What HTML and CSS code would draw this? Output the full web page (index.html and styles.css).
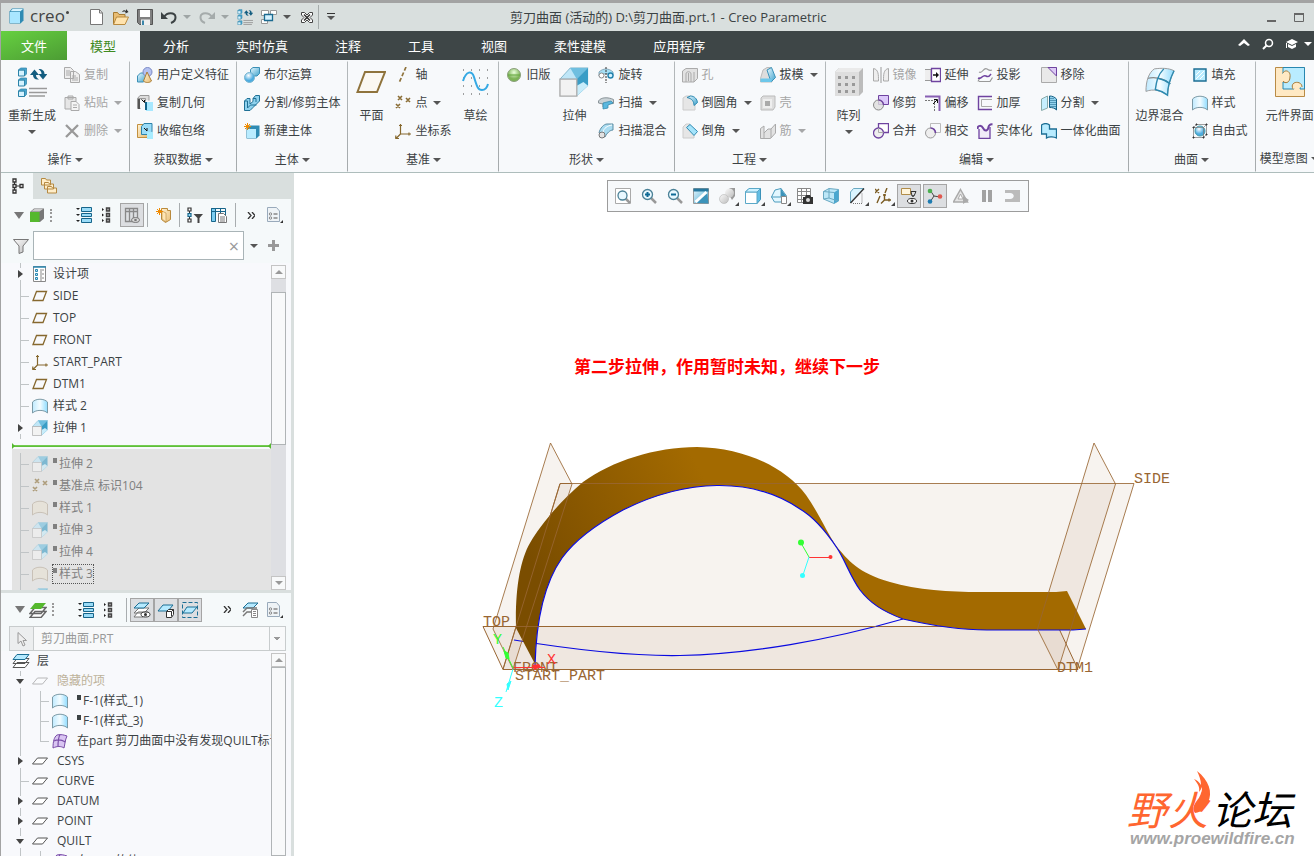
FILE: index.html
```html
<!DOCTYPE html>
<html lang="zh-CN">
<head>
    <meta charset="UTF-8">
    <meta name="viewport" content="width=device-width, initial-scale=1.0">
    <title>剪刀曲面 - Creo Parametric</title>
    <link rel="stylesheet" href="styles.css">
</head>
<body>
    <!-- Shared icons -->
    <svg class="defs" width="0" height="0" aria-hidden="true">
        <defs>
            <linearGradient id="blue" x1="0" y1="0" x2="1" y2="1"><stop offset="0" stop-color="#e8f8ff"/><stop offset="1" stop-color="#3fa3cc"/></linearGradient>
            <linearGradient id="sky" x1="0" y1="0" x2="1" y2="0"><stop offset="0" stop-color="#bfeaff"/><stop offset=".5" stop-color="#f4fcff"/><stop offset="1" stop-color="#8fdcff"/></linearGradient>
            <linearGradient id="grey" x1="0" y1="0" x2="1" y2="1"><stop offset="0" stop-color="#fafafa"/><stop offset="1" stop-color="#bdbdbd"/></linearGradient>
            <linearGradient id="tan" x1="0" y1="0" x2="1" y2="1"><stop offset="0" stop-color="#fff3d6"/><stop offset="1" stop-color="#e9bd74"/></linearGradient>
            <linearGradient id="gold" gradientUnits="userSpaceOnUse" x1="530" y1="560" x2="700" y2="470"><stop offset="0" stop-color="#7a4d00"/><stop offset="1" stop-color="#a36a00"/></linearGradient>
            <radialGradient id="ball" cx=".4" cy=".3"><stop offset="0" stop-color="#fff"/><stop offset="1" stop-color="#4cace0"/></radialGradient>
            <radialGradient id="greenball" cx=".5" cy=".3"><stop offset="0" stop-color="#eaffdc"/><stop offset="1" stop-color="#7cb356"/></radialGradient>
        </defs>
        <symbol id="extrude" viewBox="0 0 16 16"><path d="M.5 6.500 6 .5h9.500L9.500 6.500z" fill="#bfe6f7" stroke="#7fb4cb" stroke-width=".5"/><path d="M6 .5h9.500L9.500 6.500z" fill="#6fbfe0"/><path d="M9.500 6.500l6-6V10L9.500 15.500z" fill="#3a9dc6"/><path d="M9.500 15.500l6-5.500-2.500-2L9.500 10z" fill="#c8ecfa"/><path d="M.5 6.500h9v9h-9z" fill="#f2f2f2" stroke="#aaa" stroke-width=".7"/></symbol>
        <symbol id="surf" viewBox="0 0 16 16"><path d="M.5 4C4 .3 12 .3 15.500 4v11C12 11.500 4 11.500.5 15z" fill="url(#sky)" stroke="#7c9aa6"/></symbol>
        <symbol id="surfoff" viewBox="0 0 16 16"><path d="M.5 4C4 .3 12 .3 15.500 4v11C12 11.500 4 11.500.5 15z" fill="#e9e2d4" stroke="#b8ac9a"/></symbol>
        <symbol id="plane" viewBox="0 0 16 16"><path d="M4.500 3.500h10l-3.500 9H1z" fill="none" stroke="#86682e" stroke-width="1.300"/></symbol>
        <symbol id="csys" viewBox="0 0 16 16"><path d="M5.500 1v10H16M5.500 11 1 15.500M4 2.500h3M14 9.500v3M.8 12.500v3.200H4" fill="none" stroke="#86682e" stroke-width="1.200"/></symbol>
        <symbol id="points" viewBox="0 0 16 16"><path d="M3 1l4 4M7 1 3 5M11 3l4 4m0-4-4 4M1 9l4 4m0-4-4 4" stroke="#8a6d35" stroke-width="1.600"/></symbol>
        <symbol id="layer" viewBox="0 0 16 16"><path d="M5.500 5H15.500L10.500 11H.5z" fill="#fff" stroke="#555"/></symbol>
        <symbol id="quilt" viewBox="0 0 16 16"><path d="M1 15C1 9 2 4 5 2c4-1 7 0 10 1-2 4-2 8-3 12-3-2-7-2-11 0z" fill="#d9c5f2" stroke="#7a4ea8"/><path d="M8 1.500C6 5 6 9 6 14M2 8c4-2 8-1 11.500 1" fill="none" stroke="#7a4ea8" stroke-width="1.200"/></symbol>
        <symbol id="rows" viewBox="0 0 16 16"><path d="M5.500.5h10v4h-10zM5.500 6.500h10v3h-10zM5.500 11.500h10v4h-10z" fill="#9adcf8" stroke="#17658a"/><path d="M0 1h4L2 3zM0 7h4L2 9zM0 13h4l-2 2z" fill="#222"/></symbol>
        <symbol id="boxes" viewBox="0 0 16 16"><path d="M6.500 1h3v3h-3zM6.500 6.500h3v3h-3zM6.500 12h3v3h-3z" fill="#aaa" stroke="#444" stroke-width="1.400"/><path d="M2 1l2 1.500L2 4zM2 6.500l2 1.500-2 1.500zM2 12l2 1.500L2 15z" fill="#222"/></symbol>
        <symbol id="doc" viewBox="0 0 16 16"><path d="M.5.5h9l3 3.500v10.500H.5z" fill="#eef3f6" stroke="#9ab"/><circle cx="3.500" cy="7" r="1.200" fill="none" stroke="#888"/><circle cx="3.500" cy="11" r="1.200" fill="none" stroke="#888"/><path d="M6.500 7h4M6.500 11h4" stroke="#888" stroke-width="1.400"/><path d="M16 13v3h-3z" fill="#333"/></symbol>
        <symbol id="regen" viewBox="0 0 30 30"><path d="M1.500 3h6v6h-6zM1.500 13h6v6h-6zM1.500 24h6v5.500h-6z" fill="#d4f2ff" stroke="#2b82a8"/><path d="M1.500 3 3.500 1h6v6l-2 2V3zM1.500 13l2-2h6v6l-2 2v-6zM1.500 24l2-2h6v5.500l-2 2V24z" fill="#49a6cf" stroke="#2b82a8" stroke-width=".7"/><path d="M12 21.500h19M12 25.500h19M12 29h16" stroke="#9a9a9a" stroke-width="1.700"/><path d="M13 8l4.500-5.500L22 8h-3c0 2 1 3 3 4.500C18 13 16 11 16 8z" fill="#135d80"/><path d="M30.500 7 26 12.500 21.500 7h3c0-2-1-3.500-3-5C25.500 2 27.500 4 27.500 7z" fill="#135d80"/></symbol>
        <symbol id="mag" viewBox="0 0 16 16"><path d="M10 10l5 5" stroke="#999" stroke-width="2.500"/><circle cx="6.500" cy="6.500" r="5" fill="#e9f8ff" stroke="#4b8197" stroke-width="1.300"/></symbol>
    </svg>

    <div class="app">
        <header class="titlebar">
            <div class="brand">
                <svg width="15" height="16" viewBox="0 0 15 16"><path d="M.5 3.500 3 .5h11.500v12l-3 3H.5z" fill="#2f8bb3"/><path d="M1 4h10v11H1z" fill="#a9e6ff"/><path d="M1.500 3.200 3.500 1H14l-2.500 2.200z" fill="#d7f4ff"/></svg>
                <span>creo</span>
            </div>
            <nav class="quick" aria-label="快速访问">
                <button aria-label="新建"><svg class="ic" viewBox="0 0 16 16"><path d="M1.500.5h9l3 3.500v11.500h-12z" fill="#fff" stroke="#777"/><path d="M10.500.5V4h3" fill="none" stroke="#777"/></svg></button>
                <button aria-label="打开"><svg class="ic" viewBox="0 0 16 16"><path d="M.5 15V3.500h4l1.500 2h6V8" fill="#e9bd74" stroke="#a67a32"/><path d="M.5 15.500 3.500 8h12l-3.500 7.500z" fill="#ffe3ae" stroke="#b88a3e"/><path d="M9 3c1-2 3-2 4-1V0l2.500 3-3 1.500V3C11 2 10 3 9 3z" fill="#333"/></svg></button>
                <button aria-label="保存"><svg class="ic" viewBox="0 0 16 16"><path d="M.5.5h15v15h-13l-2-2z" fill="#808080" stroke="#555"/><path d="M3 1h10v7H3z" fill="#fff"/><path d="M4 10.500h9V16H4z" fill="#eee"/><path d="M5 11.500h2V16H5z" fill="#3b86aa"/></svg></button>
                <button aria-label="撤消"><svg class="ic" viewBox="0 0 16 16"><path d="M3 8c3-5 11-5 11.500 0 .2 3-2 5-4.500 6" fill="none" stroke="#3c4244" stroke-width="2"/><path d="M0 3v7h7z" fill="#3c4244"/></svg></button>
                <button class="arr off" aria-label="撤消列表"></button>
                <button aria-label="重做"><svg class="ic" viewBox="0 0 16 16"><path d="M13 8C10 3 2 3 1.500 8c-.2 3 2 5 4.500 6" fill="none" stroke="#a5abab" stroke-width="2"/><path d="M16 3v7H9z" fill="#a5abab"/></svg></button>
                <button class="arr off" aria-label="重做列表"></button>
                <button aria-label="重新生成"><svg class="ic"><use href="#regen"/></svg></button>
                <button aria-label="窗口"><svg class="ic" viewBox="0 0 16 16"><path d="M.5 1.500h7v5h-7zM9.500 1.500h6v4h-6zM.5 10.500h6v4h-6z" fill="#fff" stroke="#999"/><path d="M3.500 5.500h8v6h-8z" fill="#d5f2ff" stroke="#1b6a90" stroke-width="1.300"/></svg></button>
                <button class="arr" aria-label="窗口列表"></button>
                <button aria-label="关闭"><svg class="ic" viewBox="0 0 16 16"><path d="M2.500 3.500h3L8 6l2.500-2.500h3V6L11 8.500l2.500 2.500v2.500h-3L8 11l-2.500 2.500h-3V11L5 8.500 2.500 6z" fill="#fff" stroke="#444"/><path d="M5 5.500l6 6M11 5.500l-6 6" stroke="#333" stroke-width="1.500"/></svg></button>
                <i class="vsep"></i>
                <button class="arr more" aria-label="自定义"></button>
            </nav>
            <h1>剪刀曲面 (活动的) D:\剪刀曲面.prt.1 - Creo Parametric</h1>
            <div class="winbtns">
                <button aria-label="最小化"><svg width="10" height="10"><path d="M1 8h9v2H1z" fill="#666"/></svg></button>
                <button aria-label="最大化"><svg width="10" height="10"><path d="M.5 1.500h9v8h-9z" fill="none" stroke="#666"/><path d="M0 1h10v2H0z" fill="#666"/></svg></button>
            </div>
        </header>

        <nav class="tabs">
            <button class="file">文件</button>
            <button class="active">模型</button>
            <button>分析</button>
            <button>实时仿真</button>
            <button>注释</button>
            <button>工具</button>
            <button>视图</button>
            <button>柔性建模</button>
            <button>应用程序</button>
            <div class="tools">
                <button aria-label="折叠"><svg width="12" height="12"><path d="M0 7l6-6 6 6-2 1-4-3-4 3z" fill="#fff"/></svg></button>
                <button aria-label="搜索"><svg width="12" height="12"><circle cx="7" cy="5" r="3.500" fill="none" stroke="#fff" stroke-width="1.500"/><path d="M5 7l-4 4" stroke="#fff" stroke-width="2"/></svg></button>
                <button aria-label="学习"><svg width="12" height="12"><path d="M0 4l6-3 6 3-6 3z" fill="#fff"/><path d="M2 6l4 2 4-2v3l-4 2-4-2zM0 5h1v5H0z" fill="#fff"/></svg></button>
                <button class="arr white" aria-label="学习列表"></button>
            </div>
        </nav>

        <section class="ribbon">
            <div class="group">
                <div class="cols">
                    <button class="big"><svg class="ic30"><use href="#regen"/></svg>重新生成<i class="arr"></i></button>
                    <div class="col">
                        <button disabled><svg class="ic" viewBox="0 0 16 16"><path d="M.5.500h6l3 3v8h-9zM6.500 4.500h5l4 3v8h-9z" fill="#eee" stroke="#aaa"/><path d="M2 4h4M2 6h4M2 8h4M8 9h4M8 11h6M8 13h6" stroke="#aaa"/></svg>复制</button>
                        <button disabled><svg class="ic" viewBox="0 0 16 16"><path d="M1 2.500h11V14H1zM4 1h5v3H4z" fill="#e6e6e6" stroke="#aaa"/><path d="M7 6.500h5l3 3v6H7z" fill="#f5f5f5" stroke="#aaa"/><path d="M9 10h4M9 12.500h4" stroke="#aaa"/></svg>粘贴<i class="arr"></i></button>
                        <button disabled><svg class="ic" viewBox="0 0 16 16"><path d="M2 2l12 12M14 2 2 14" stroke="#999" stroke-width="2.300"/></svg>删除<i class="arr"></i></button>
                    </div>
                </div>
                <button class="caption">操作<i class="arr"></i></button>
            </div>
            <div class="group">
                <div class="cols">
                    <div class="col">
                        <button><svg class="ic" viewBox="0 0 16 16"><path d="M.5 9l3-3h6v6l-3 3h-6z" fill="url(#blue)" stroke="#3b8fb5"/><circle cx="10.500" cy="5" r="4.500" fill="#b4c1f0" stroke="#7a89c4"/><path d="M10 5l4.500 9c-2 2-6 2-8 0z" fill="url(#tan)" stroke="#a87d37"/></svg>用户定义特征</button>
                        <button><svg class="ic" viewBox="0 0 16 16"><path d="M.5 3.500 3 .5h9v5M.5 3.500h8v3M.5 3.500v10h3" fill="#ddd" stroke="#999"/><path d="M1 4h2v10H1z" fill="#555"/><path d="M9 7h7v9H9z" fill="#a8e8ff"/><path d="M8 7h2v8H8z" fill="#13648a"/><path d="M4.500 4.500l3 3V5" fill="none" stroke="#111"/></svg>复制几何</button>
                        <button><svg class="ic" viewBox="0 0 16 16"><path d="M.5 1.500h10v13H.5z" fill="url(#tan)" stroke="#c2903f"/><path d="M4.500 3.500 7 .5h8v8l-2 3H4.500z" fill="#9adcf8" stroke="#2c83aa"/><path d="M10 9h6v7h-6z" fill="#a8ecff"/><path d="M7 5l3 3V5" fill="none" stroke="#111"/></svg>收缩包络</button>
                    </div>
                </div>
                <button class="caption">获取数据<i class="arr"></i></button>
            </div>
            <div class="group">
                <div class="cols">
                    <div class="col">
                        <button><svg class="ic" viewBox="0 0 16 16"><path d="M6.500 2.500 9 .5h6.500v6L13 9H6.500z" fill="url(#blue)" stroke="#3b8fb5"/><circle cx="5.500" cy="10.500" r="5" fill="url(#ball)" stroke="#79b5d0"/></svg>布尔运算</button>
                        <button><svg class="ic" viewBox="0 0 16 16"><path d="M.5 6 3 3.500h3V9l3-2.500V3.500L11.500.5h4V6L9 12.500 6 15.500H.5z" fill="#8fd2ee" stroke="#1f7095"/><path d="M.5 6h3v7l3-3h6M9 3.500h3V7" fill="none" stroke="#1f7095"/></svg>分割/修剪主体</button>
                        <button><svg class="ic" viewBox="0 0 16 16"><path d="M2.500 5.500 5 2.500h10.500v10l-3 3h-10z" fill="#2f8bb3"/><path d="M3 6h9v9H3z" fill="#b9ecff"/><path d="M3.500 0v7M0 3.500h7M1 1l5 5M6 1 1 6" stroke="#f08a00"/></svg>新建主体</button>
                    </div>
                </div>
                <button class="caption">主体<i class="arr"></i></button>
            </div>
            <div class="group">
                <div class="cols">
                    <button class="big"><svg class="ic30" viewBox="0 0 30 30"><path d="M9 5h20l-8 20H1.500z" fill="#fbf8f2" stroke="#8f733c" stroke-width="2"/></svg>平面</button>
                    <div class="col">
                        <button><svg class="ic" viewBox="0 0 16 16"><path d="M11 0 4 16" stroke="#8f733c" stroke-width="1.700" stroke-dasharray="4 2"/></svg>轴</button>
                        <button><svg class="ic"><use href="#points"/></svg>点<i class="arr"></i></button>
                        <button><svg class="ic"><use href="#csys"/></svg>坐标系</button>
                    </div>
                    <button class="big"><svg class="ic30" viewBox="0 0 30 30"><path d="M3 3h27M3 11h27M3 19h27M3 27h27" stroke="#444" stroke-dasharray="1 7"/><path d="M3 14C6 4 12 3 14 10c3 10 4 13 8 13 3 0 5-2 6-6" fill="none" stroke="#35a9e4" stroke-width="2"/></svg>草绘</button>
                </div>
                <button class="caption">基准<i class="arr"></i></button>
            </div>
            <div class="group">
                <div class="cols">
                    <div class="col">
                        <button><svg class="ic" viewBox="0 0 16 16"><circle cx="8" cy="8" r="6.500" fill="url(#greenball)" stroke="#8ba07c"/><path d="M2 8h12" stroke="#63a63c"/></svg>旧版</button>
                    </div>
                    <button class="big"><svg class="ic30"><use href="#extrude"/></svg>拉伸</button>
                    <div class="col">
                        <button><svg class="ic" viewBox="0 0 16 16"><path d="M1 5c4-4 10-4 14 0v4c-4-3-10-3-14 0z" fill="#a5dff5" stroke="#8ab"/><circle cx="3.500" cy="8.500" r="2.500" fill="#fff" stroke="#888"/><circle cx="12.500" cy="8.500" r="2.500" fill="#d4f3ff" stroke="#2382ad" stroke-width="1.400"/><path d="M8 0v16" stroke="#333" stroke-dasharray="2 1"/></svg>旋转</button>
                        <button><svg class="ic" viewBox="0 0 16 16"><path d="M.5 6C3 2 10 2 15.500 4.500v4L9 9v4l-4-1V9L.5 8z" fill="#c9d2d6" stroke="#8a9499"/><path d="M5 8l8-2 2 2-5 2v3l-5 1z" fill="#5bb8df" stroke="#2f86aa" stroke-width=".7"/></svg>扫描<i class="arr"></i></button>
                        <button><svg class="ic" viewBox="0 0 16 16"><path d="M1 10C2 5 6 1 9 1h6v6c-3 0-6 3-8 7z" fill="#a9dcf1" stroke="#5c8da3"/><path d="M5 9c1-4 4-6 9-7" fill="none" stroke="#fff"/><circle cx="4" cy="12" r="3" fill="#e2e2e2" stroke="#777"/></svg>扫描混合</button>
                    </div>
                </div>
                <button class="caption">形状<i class="arr"></i></button>
            </div>
            <div class="group">
                <div class="cols">
                    <div class="col">
                        <button disabled><svg class="ic" viewBox="0 0 16 16"><path d="M.5 4 4 1.500h11.500v10L12 15H.5z" fill="#e2e2e2" stroke="#aaa"/><path d="M4 15V7c0-3 5-3 5 0v8M12 5v10M6.500 6v8" fill="none" stroke="#aaa"/></svg>孔</button>
                        <button><svg class="ic" viewBox="0 0 16 16"><path d="M1 3 4 1h5l-3 2c4 0 7 3 7 7v5H1z" fill="#e6e6e6" stroke="#ccc"/><path d="M5 2.500 8.500 1c4 0 6.500 3 7 6.500L12 10.500c0-4-2-7-7-8z" fill="url(#blue)" stroke="#2f8bb3"/></svg>倒圆角<i class="arr"></i></button>
                        <button><svg class="ic" viewBox="0 0 16 16"><path d="M1 4 4 1h4L6 4l6 7v4H1z" fill="#e6e6e6" stroke="#ccc"/><path d="M4.500 4.500 8 1.500l7.500 7-3.500 4z" fill="#a5e4fb" stroke="#2f8bb3"/></svg>倒角<i class="arr"></i></button>
                    </div>
                    <div class="col">
                        <button><svg class="ic" viewBox="0 0 16 16"><path d="M.5 11.500 3 3l4-2.500 4 0 1 11.500v3H.5z" fill="#ddd" stroke="#bbb"/><path d="M7 3 11.500.5l4 10-4.500 4.500z" fill="url(#blue)" stroke="#3a92b9"/><path d="M.5 11.500h11v3.500H.5z" fill="#6dc7ea"/></svg>拔模<i class="arr"></i></button>
                        <button disabled><svg class="ic" viewBox="0 0 16 16"><path d="M1 3 3 1h12v11l-2 3H1z" fill="#ddd" stroke="#bbb"/><path d="M4 5h7v7H4z" fill="#aaa" stroke="#eee" stroke-width="2"/></svg>壳</button>
                        <button disabled><svg class="ic" viewBox="0 0 16 16"><path d="M.5 15.500v-10L4 3v7l4-4h3l4.500-5v9l-5 5.500z" fill="#e2e2e2" stroke="#aaa"/><path d="M4 10v5M11 6v9" stroke="#aaa"/></svg>筋<i class="arr"></i></button>
                    </div>
                </div>
                <button class="caption">工程<i class="arr"></i></button>
            </div>
            <div class="group">
                <div class="cols">
                    <button class="big"><svg class="ic30" viewBox="0 0 30 30"><path d="M1 5 5 1h24v24l-4 4H1z" fill="#bcbcbc"/><path d="M1 5h24v24H1z" fill="#dedede"/><path d="M1 5 5 1h24l-4 4z" fill="#eaeaea"/><path d="M4 10.500h17M4 17.500h17M4 24.500h17" stroke="#999" stroke-width="3" stroke-dasharray="3 4"/></svg>阵列<i class="arr"></i></button>
                    <div class="col">
                        <button disabled><svg class="ic" viewBox="0 0 16 16"><path d="M.5 1.500c5 1 5 6 5 12.500h-5zM15.500 1.500c-5 1-5 6-5 12.500h5z" fill="#eee" stroke="#aaa"/><path d="M8 0v16" stroke="#999"/></svg>镜像</button>
                        <button><svg class="ic" viewBox="0 0 16 16"><path d="M5.500.5h10v9h-10z" fill="#dcc8fa" stroke="#6f43a0"/><circle cx="5.500" cy="10" r="5" fill="#ddd" fill-opacity=".8" stroke="#888"/><path d="M5.500 5a5 5 0 0 1 5 5" fill="none" stroke="#6f43a0" stroke-width="1.300"/></svg>修剪</button>
                        <button><svg class="ic" viewBox="0 0 16 16"><path d="M5.500.5h10v9h-10z" fill="#fff" stroke="#6f43a0" stroke-width="1.300"/><circle cx="5.500" cy="10" r="5" fill="#eee" stroke="#6f43a0" stroke-width="1.300"/><path d="M5.500 5v4.500h5" fill="none" stroke="#aaa"/></svg>合并</button>
                    </div>
                    <div class="col">
                        <button><svg class="ic" viewBox="0 0 16 16"><path d="M0 2.500h6v11H0" fill="#eee" stroke="#999"/><path d="M6.500 1.500h9v13h-9z" fill="#fff" stroke="#6f43a0" stroke-width="1.300"/><path d="M8 8h4" stroke="#111" stroke-width="1.500"/><path d="M11 5l3 3-3 3z" fill="#111"/></svg>延伸</button>
                        <button><svg class="ic" viewBox="0 0 16 16"><path d="M0 1.500h14.500V16" fill="none" stroke="#8860b4" stroke-width="2"/><path d="M0 5.500h9.500V16" fill="none" stroke="#777" stroke-dasharray="2 1"/><path d="M8 9l4-4M9 4.500h3.500V8" fill="none" stroke="#111"/></svg>偏移</button>
                        <button><svg class="ic" viewBox="0 0 16 16"><path d="M5.500.5h10v9h-10z" fill="none" stroke="#bbb"/><circle cx="5.500" cy="10" r="5" fill="#eee" stroke="#999"/><path d="M5.500 5a5 5 0 0 1 5 5" fill="none" stroke="#6f43a0" stroke-width="1.700"/></svg>相交</button>
                    </div>
                    <div class="col">
                        <button><svg class="ic" viewBox="0 0 16 16"><path d="M2 5c4 2 4-5 8-3 2 1 2 2 5 1M2 14.500h11l2.500-4M1 14.500l2-4" fill="none" stroke="#999" stroke-width="1.200"/><path d="M1 11c4 2 4-4 8-2 2 1 3 1 5-2" fill="none" stroke="#6f43a0" stroke-width="1.500"/></svg>投影</button>
                        <button><svg class="ic" viewBox="0 0 16 16"><path d="M15 1.500H1.500v13H15" fill="none" stroke="#6f43a0" stroke-width="1.400"/><path d="M15 4.500H4.500v7H15" fill="none" stroke="#aaa"/></svg>加厚</button>
                        <button><svg class="ic" viewBox="0 0 16 16"><path d="M2 6v9.500h11V4" fill="#f1ecf8" stroke="#6f43a0" stroke-width="1.300"/><path d="M.5 6c0-4 4-4 5.500-1 2 4 5 3 5.500-1 .3-2 2-3 4-2.500" fill="none" stroke="#6f43a0" stroke-width="2"/></svg>实体化</button>
                    </div>
                    <div class="col">
                        <button><svg class="ic" viewBox="0 0 16 16"><path d="M.5.500h15v15H.5z" fill="#e9e9e9" stroke="#aaa"/><path d="M7 .5h8.500V9z" fill="#dccaf5" stroke="#6f43a0"/></svg>移除</button>
                        <button><svg class="ic" viewBox="0 0 16 16"><path d="M.5 4 6.500 1v12l-6 2.500z" fill="#c6efff" stroke="#8aa"/><path d="M8.500 1c3 0 5 1 7 3v11c-2-2-4-2.500-7-2.500z" fill="#93d3ee" stroke="#145f84"/><path d="M10 3v9M12 3v10M14 5v9" stroke="#145f84" stroke-dasharray="1 1"/></svg>分割<i class="arr"></i></button>
                        <button><svg class="ic" viewBox="0 0 16 16"><path d="M.5 2c3-2 6-1.500 8 0v4h7v9c-2-1-7-2-10 0v-4h-5z" fill="#b9ecff" stroke="#1c6e94" stroke-width="1.300"/></svg>一体化曲面</button>
                    </div>
                </div>
                <button class="caption">编辑<i class="arr"></i></button>
            </div>
            <div class="group">
                <div class="cols">
                    <button class="big"><svg class="ic30" viewBox="0 0 32 30"><path d="M1 25C1 14 4 5 10 1c8-1 15-1 21 2-4 8-6 15-7 26-7-5-15-7-23-4z" fill="url(#sky)" stroke="#999"/><path d="M3 11c9-2 16 0 24 6" fill="none" stroke="#888" stroke-width="1.300"/><path d="M20 1C13 8 12 16 11 23c5 1 9 3 13 6 0-10 3-18 7-26M14 11c5 1 9 3 13 6" fill="none" stroke="#2d8ab0" stroke-width="1.500"/></svg>边界混合</button>
                    <div class="col">
                        <button><svg class="ic" viewBox="0 0 16 16"><path d="M2 2h12v12H2z" fill="#b9ecff" stroke="#1c6e94" stroke-width="1.400"/><path d="M4 12l8-8M4 8l4-4M8 12l4-4" stroke="#fff"/></svg>填充</button>
                        <button><svg class="ic"><use href="#surf"/></svg>样式</button>
                        <button><svg class="ic" viewBox="0 0 16 16"><circle cx="8" cy="8" r="5" fill="url(#ball)" stroke="#49a"/><path d="M1.500 4.500h10v10h-10zM4.500 1.500h10v10M1.500 4.500l3-3M11.500 4.500l3-3M11.500 14.500l3-3" fill="none" stroke="#777" stroke-width=".7"/><path d="M1 4h1v1H1zM4 1h1v1H4zM14 1h1v1h-1zM1 14h1v1H1zM11 14h1v1h-1zM14 11h1v1h-1z" stroke="#333" fill="#333"/></svg>自由式</button>
                    </div>
                </div>
                <button class="caption">曲面<i class="arr"></i></button>
            </div>
            <div class="group last">
                <div class="cols">
                    <button class="big"><svg class="ic30" viewBox="0 0 30 30"><path d="M.5.500h29v29H.5z" fill="#ffe9c4" stroke="#b98b45"/><path d="M8 .5h21.500V22H25c3-8-8-8-6 0H8v-7c8 3 8-10 0-8z" fill="#b9ecff" stroke="#2887b0"/><path d="M8 6c2-4 8-2 7 4 0 6-5 7-7 4M18 22c-4-8 9-9 9-2" fill="#ffe9c4" stroke="#a67c3b"/></svg>元件界面</button>
                </div>
                <button class="caption">模型意图<i class="arr"></i></button>
            </div>
        </section>

        <main class="work">
            <aside class="side">
                <div class="strip">
                    <button class="on" aria-label="模型树"><svg class="ic" viewBox="0 0 16 16"><path d="M5.500 4v8M7 8h5" stroke="#333"/><path d="M4 1h3v3H4zM4 6.500h3v3H4zM4 12h3v3H4zM11 6.500h3v3h-3z" fill="#fff" stroke="#333" stroke-width="1.300"/></svg></button>
                    <button aria-label="文件夹浏览器"><svg class="ic" viewBox="0 0 16 16"><path d="M.5 7V.5h4l1 1.500h4v5zM3.500 11V4.500h4l1 1.500h4v5zM6.500 15V8.500h4l1 1.500h4v5z" fill="#ffedc8" stroke="#b48942"/></svg></button>
                </div>
                <div class="bar">
                    <button class="fold" aria-label="折叠"></button>
                    <svg class="ic" viewBox="0 0 16 16"><path d="M1 5 5 1.500h10v10L11 15H1z" fill="#777"/><path d="M2 4.500 5.500 2H14l-3.500 2.500z" fill="#ccc"/><path d="M1 5h9.500v10H1z" fill="#55b82e"/></svg>
                    <i class="dots"></i>
                    <button aria-label="展开"><svg class="ic"><use href="#rows"/></svg></button>
                    <button aria-label="收缩"><svg class="ic"><use href="#boxes"/></svg></button>
                    <button class="on" aria-label="树列"><svg class="ic" viewBox="0 0 16 16"><path d="M1.500 1.500h12v13h-12zM1.500 4.500h12M5.500 1.500v13M9.500 1.500v13" fill="none" stroke="#888" stroke-width="1.300"/><ellipse cx="11.500" cy="13" rx="4" ry="2.500" fill="#ddd" stroke="#777"/><circle cx="11.500" cy="13" r="1.300" fill="#777"/></svg></button>
                    <i class="sep"></i>
                    <button aria-label="新建文件夹"><svg class="ic" viewBox="0 0 16 16"><path d="M5.500 1.500h6v2h3v9l-5 3-4-3z" fill="url(#tan)" stroke="#b98a3d"/><path d="M6 4l4 2v9l-4-3z" fill="#ffe6b5" stroke="#b98a3d" stroke-width=".6"/><path d="M3.500 1v7M0 4.500h7M1 2l5 5M6 2 1 7" stroke="#f08a00"/></svg></button>
                    <i class="sep"></i>
                    <button aria-label="树过滤器"><svg class="ic" viewBox="0 0 16 16"><path d="M2.500 4v9" stroke="#333"/><path d="M1 1h3v3H1zM1 12h3v3H1z" fill="#fff" stroke="#333" stroke-width="1.200"/><path d="M1 6.500h3v3H1z" fill="#9adcf8" stroke="#17658a" stroke-width="1.200"/><path d="M6.500 7H16l-3.500 4v5h-2v-5z" fill="#444"/></svg></button>
                    <button aria-label="树设置"><svg class="ic" viewBox="0 0 16 16"><path d="M.5 1.500h4v13h-4z" fill="#7ccdf0" stroke="#17658a"/><path d="M.5 1.500h14v3H.5zM4.500 4.500V14M9.500 1.500V8M14.500 4v4" fill="none" stroke="#17658a"/><path d="M7.500 6.500h5l3 3v6h-8z" fill="#fff" stroke="#777"/><path d="M9 10h5M9 12h5M9 14h5" stroke="#777"/></svg></button>
                    <i class="sep"></i>
                    <button class="chev" aria-label="更多"><svg width="8" height="7"><path d="M1 0l3 3.500L1 7M5 0l3 3.500L5 7" fill="none" stroke="#333" stroke-width="1.300"/></svg></button>
                    <button aria-label="显示"><svg class="ic"><use href="#doc"/></svg></button>
                </div>
                <div class="filter">
                    <svg class="ic" viewBox="0 0 16 16"><path d="M.5 1.500h15L10 8v6l-4 1.500V8z" fill="url(#grey)" stroke="#777"/></svg>
                    <div class="search"><input type="text" aria-label="搜索模型树"><button aria-label="清除">×</button></div>
                    <button class="arr" aria-label="搜索选项"></button>
                    <button aria-label="添加"><svg width="11" height="11"><path d="M5.500 0v11M0 5.500h11" stroke="#999" stroke-width="3"/></svg></button>
                </div>
                <div class="pane model">
                    <div class="rowsbox">
                        <ul class="tree">
                            <li><i class="br closed"></i><svg class="ic" viewBox="0 0 16 16"><path d="M1.500.500h12v15h-12z" fill="#fff" stroke="#888"/><path d="M1 1h13" stroke="#2887b0" stroke-width="1.500"/><path d="M3.500 3.500h2v2h-2zM3.500 7.500h2v2h-2zM3.500 11.500h2v2h-2z" fill="#bde8fb" stroke="#2887b0"/><path d="M8 4h4M8 6h2M8 8h4M8 10h2M8 12h4M8 14h2" stroke="#888"/></svg><span>设计项</span></li>
                            <li><i class="br"></i><svg class="ic"><use href="#plane"/></svg><span>SIDE</span></li>
                            <li><i class="br"></i><svg class="ic"><use href="#plane"/></svg><span>TOP</span></li>
                            <li><i class="br"></i><svg class="ic"><use href="#plane"/></svg><span>FRONT</span></li>
                            <li><i class="br"></i><svg class="ic"><use href="#csys"/></svg><span>START_PART</span></li>
                            <li><i class="br"></i><svg class="ic"><use href="#plane"/></svg><span>DTM1</span></li>
                            <li><i class="br"></i><svg class="ic"><use href="#surf"/></svg><span>样式 2</span></li>
                            <li><i class="br closed"></i><svg class="ic"><use href="#extrude"/></svg><span>拉伸 1</span></li>
                        </ul>
                        <div class="insert"></div>
                        <ul class="tree rolled">
                            <li><i class="br"></i><svg class="ic"><use href="#extrude"/></svg><span class="mark">拉伸 2</span></li>
                            <li><i class="br"></i><svg class="ic"><use href="#points"/></svg><span class="mark">基准点 标识104</span></li>
                            <li><i class="br"></i><svg class="ic"><use href="#surfoff"/></svg><span class="mark">样式 1</span></li>
                            <li><i class="br"></i><svg class="ic"><use href="#extrude"/></svg><span class="mark">拉伸 3</span></li>
                            <li><i class="br"></i><svg class="ic"><use href="#extrude"/></svg><span class="mark">拉伸 4</span></li>
                            <li><i class="br"></i><svg class="ic"><use href="#surfoff"/></svg><span class="mark focus">样式 3</span></li>
                            <li><i class="br"></i><svg class="ic"><use href="#extrude"/></svg><span class="mark"></span></li>
                        </ul>
                    </div>
                    <div class="scroll"><i class="up"></i><i class="thumb"></i><i class="down"></i></div>
                </div>
                <div class="bar second">
                    <button class="fold" aria-label="折叠"></button>
                    <svg class="ic18" viewBox="0 0 18 16"><path d="M6 9.500h11l-5 6H1zM6 5.500h11l-5 6H1z" fill="#fff" stroke="#666" stroke-width="1.500"/><path d="M6 1h11l-5 6H1z" fill="#55b82e"/></svg>
                    <i class="dots"></i>
                    <button aria-label="展开"><svg class="ic"><use href="#rows"/></svg></button>
                    <button aria-label="收缩"><svg class="ic"><use href="#boxes"/></svg></button>
                    <i class="sep"></i>
                    <button class="on" aria-label="显示层"><svg class="ic18" viewBox="0 0 18 16"><path d="M6 6h10l-5 5H1zM5 10h10l-5 5H1z" fill="#fff" stroke="#777"/><path d="M6 1h10l-5 5H1z" fill="#b6eaff" stroke="#1c6e94"/><ellipse cx="12.500" cy="12.500" rx="4.500" ry="2.500" fill="#fff" stroke="#333"/><circle cx="12.500" cy="12.500" r="1.500" fill="#333"/></svg></button>
                    <button class="on" aria-label="层项"><svg class="ic18" viewBox="0 0 18 16"><path d="M6 3h10l-5 6H1z" fill="#b6eaff" stroke="#1c6e94"/><path d="M9.500 9.500l2-2h5v5l-2 3h-5zM9.500 9.500h5v5M14.500 9.500l2-2" fill="#fff" stroke="#333"/></svg></button>
                    <button class="on" aria-label="选择层"><svg class="ic18" viewBox="0 0 18 16"><path d="M6 5h10l-5 6H2z" fill="#b6eaff" stroke="#1c6e94"/><path d="M1.500.500h15v15h-15z" fill="none" stroke="#1c6e94" stroke-dasharray="4 2"/></svg></button>
                    <button class="chev push" aria-label="更多"><svg width="8" height="7"><path d="M1 0l3 3.500L1 7M5 0l3 3.500L5 7" fill="none" stroke="#333" stroke-width="1.300"/></svg></button>
                    <button aria-label="层设置"><svg class="ic18" viewBox="0 0 18 16"><path d="M6 1h10l-5 5H1z" fill="#b6eaff" stroke="#1c6e94"/><path d="M1 10l4-4h10M1 14l4-4h6" fill="none" stroke="#777" stroke-width="1.400"/><path d="M9.500 7.500h6v8h-6z" fill="#fff" stroke="#888"/><path d="M11 9.500h3M11 11.500h3M11 13.500h3" stroke="#888"/></svg></button>
                    <button aria-label="显示"><svg class="ic"><use href="#doc"/></svg></button>
                </div>
                <div class="combo">
                    <button aria-label="选择"><svg class="ic" viewBox="0 0 16 16"><path d="M5 1.500v11l3-2.500 2 5 2-1-2-4.500h3.500z" fill="#eee" stroke="#999"/></svg></button>
                    <select aria-label="模型" disabled><option>剪刀曲面.PRT</option></select>
                </div>
                <div class="pane layers">
                    <div class="rowsbox">
                        <ul class="tree">
                            <li class="root"><svg class="ic18" viewBox="0 0 18 16"><path d="M5 9.500h12l-4 5H1zM5 5.500h12l-4 5H1z" fill="#fff" stroke="#555"/><path d="M5 1.500h12l-4 5H1z" fill="#b6eaff" stroke="#1c6e94"/></svg><span>层</span></li>
                            <li class="hid"><i class="br open"></i><svg class="ic"><use href="#layer"/></svg><span>隐藏的项</span></li>
                            <li class="child"><i class="br skip"></i><i class="br"></i><svg class="ic"><use href="#surf"/></svg><span class="mark">F-1(样式_1)</span></li>
                            <li class="child"><i class="br skip"></i><i class="br"></i><svg class="ic"><use href="#surf"/></svg><span class="mark">F-1(样式_3)</span></li>
                            <li class="child"><i class="br skip"></i><i class="br end"></i><svg class="ic"><use href="#quilt"/></svg><span>在part 剪刀曲面中没有发现QUILT标识</span></li>
                            <li><i class="br closed"></i><svg class="ic"><use href="#layer"/></svg><span>CSYS</span></li>
                            <li><i class="br"></i><svg class="ic"><use href="#layer"/></svg><span>CURVE</span></li>
                            <li><i class="br closed"></i><svg class="ic"><use href="#layer"/></svg><span>DATUM</span></li>
                            <li><i class="br closed"></i><svg class="ic"><use href="#layer"/></svg><span>POINT</span></li>
                            <li><i class="br open"></i><svg class="ic"><use href="#layer"/></svg><span>QUILT</span></li>
                            <li class="child"><i class="br skip"></i><i class="br"></i><svg class="ic"><use href="#quilt"/></svg><span>在part 的体</span></li>
                        </ul>
                    </div>
                    <div class="scroll"><i class="up"></i><i class="thumb"></i></div>
                </div>
            </aside>

            <section class="canvas">
                <svg class="scene" viewBox="294 173 1020 683" preserveAspectRatio="xMinYMin meet">
                    <!-- datum planes -->
                    <g fill="#87581b" fill-opacity=".07">
                        <path d="M560 484h574l-57 185H503z"/>
                        <path d="M483 627h575l20 42H503z"/>
                        <path d="M550.500 443 572 484 513 669 493 629z"/>
                        <path d="M1094 443l21.500 41-57.500 186-20.500-41z"/>
                    </g>
                    <path class="edge" d="M572 483.500H560L503 669.500M483 626.500H1058l20 43M483 626.500l20 43H1078"/>
                    <path class="curve" d="M514 640c86 14 136 16 166 15.500 70-1.500 150-15.500 223-36.500"/>
                    <!-- extruded strip -->
                    <path fill="url(#gold)" d="M516 628C515 590 520 560 530 543S558 503 583 482C612 461 655 447 697 447 745 448 785 467 806 495 820 515 828 535 837 547 848 560 858 573 890 582 917 590 950 592 980 592H1056L1067 591 1086 629 1073 630H987C960 630 925 624 903 619 882 611 870 603 860 590 850 576 845 560 837 548 825 530 812 516 800 509 778 494 752 485 717 485.500 680 486 645 499 623 510 595 525 575 540 562 558 543 585 536 625 535 664z"/>
                    <path class="curve" d="M1086 629 1073 630H987C960 630 925 624 903 619 882 611 870 603 860 590 850 576 845 560 837 548 825 530 812 516 800 509 778 494 752 485 717 485.500 680 486 645 499 623 510 595 525 575 540 562 558 543 585 536 625 535 666"/>
                    <path class="edge over" d="M560 483.500H1134L1077 669.500M550.500 443 572 484 513 669 493 629zM1094 443l21.500 41-57.500 186-20.500-41zM560 484 503 669M516 626.500h360"/>
                    <g class="tag">
                        <text x="1134" y="483">SIDE</text>
                        <text x="483" y="626">TOP</text>
                        <text x="513" y="672">FRONT</text>
                        <text x="515" y="680">START_PART</text>
                        <text x="1057" y="672">DTM1</text>
                    </g>
                    <!-- coordinate system -->
                    <g fill="none">
                        <path d="M514 667.500h31" stroke="#f33"/><path d="M532 665l7-1 2 3-7 3z" fill="#f33"/>
                        <path d="M513 668l-10-21" stroke="#3f3"/><path d="M504 651l4 2 1 6-3-1z" fill="#3f3" stroke="#3f3"/>
                        <path d="M513 669l-7 23" stroke="#3ff"/><path d="M507 684l4-3-3 9z" fill="#3ff" stroke="#3ff"/>
                    </g>
                    <g class="axis">
                        <text x="547" y="664" fill="#f33">X</text>
                        <text x="493" y="644" fill="#3f3">Y</text>
                        <text x="494" y="707" fill="#3ff">Z</text>
                    </g>
                    <!-- spin center -->
                    <path d="M809 557.500h20" stroke="#f33"/><circle cx="830.500" cy="557" r="2" fill="#f33"/>
                    <path d="M809 557l-8-14" stroke="#3f3"/><circle cx="801" cy="542.500" r="3" fill="#3f3"/>
                    <path d="M809 557l-6 18" stroke="#3ff"/><circle cx="802.500" cy="575.500" r="2.500" fill="#3ff"/>

                    <text class="note" x="574" y="373">第二步拉伸，作用暂时未知，继续下一步</text>

                    <g class="mark-logo">
                        <text x="1127" y="825" fill="#ff6630">野</text>
                        <text x="1168" y="825" fill="#ff6630">火</text>
                        <text x="1212" y="825">论坛</text>
                        <path d="M1197 771c12 9 16 22 11 31-3 6-6 10-13 11-5-8 4-12 6-20 1-2 1-4 1-6-1 2-2 4-3 5 1-5-1-8-5-13 3 1 5 3 7 6 0-5-2-10-4-14z" fill="#ff6630"/>
                        <text class="url" x="1130" y="844">www.proewildfire.cn</text>
                    </g>
                </svg>
                <div class="viewbar">
                    <button aria-label="重新调整"><svg class="ic" viewBox="0 0 16 16"><path d="M.5.500h15v15H.5z" fill="#fff" stroke="#aaa"/><path d="M10 10l5 5" stroke="#999" stroke-width="2.500"/><circle cx="7.500" cy="7.500" r="4.500" fill="#e9f8ff" stroke="#4b8197" stroke-width="1.300"/></svg></button>
                    <button aria-label="放大"><svg class="ic" viewBox="0 0 16 16"><use href="#mag"/><path d="M4 6.500h5M6.500 4v5" stroke="#0e6a96" stroke-width="2"/></svg></button>
                    <button aria-label="缩小"><svg class="ic" viewBox="0 0 16 16"><use href="#mag"/><path d="M4 6.500h5" stroke="#0e6a96" stroke-width="2"/></svg></button>
                    <button aria-label="重画"><svg class="ic" viewBox="0 0 16 16"><path d="M.5.500h15v15H.5z" fill="url(#blue)" stroke="#999"/><path d="M.5.500h15v3H.5z" fill="#26789f"/><path d="M4 15 14 4l1.500 11.500z" fill="#3c93ba"/><path d="M2.500 14 13.500 4" stroke="#fff" stroke-width="3"/></svg></button>
                    <button class="menu" aria-label="渲染"><svg class="ic" viewBox="0 0 16 16"><path d="M8 3l3-3h5v8l-3 4z" fill="#999"/><circle cx="10.500" cy="5" r="4.500" fill="url(#grey)"/><circle cx="5" cy="11" r="4.500" fill="url(#grey)" stroke="#aaa" stroke-width=".5"/></svg></button>
                    <button class="menu" aria-label="显示样式"><svg class="ic" viewBox="0 0 16 16"><path d="M.5 4 4 .5h11.500v11L12 15.500z" fill="#63bde4" stroke="#3b92b9"/><path d="M.5 4H12v11.500H.5z" fill="#fff" stroke="#5aa8c8"/><path d="M.5 4 4 .5h11.500L12 4z" fill="#cdf1ff" stroke="#5aa8c8"/></svg></button>
                    <button class="menu" aria-label="已保存方向"><svg class="ic" viewBox="0 0 16 16"><path d="M.5 9 4 2l6-1.500L15.500 8 11 14H3.500z" fill="#e3f7ff" stroke="#4a9bbd"/><path d="M.5 9H10M10 .5V9" stroke="#4a9bbd"/><path d="M10 9V1l5 7v5z" fill="#3c93ba"/><path d="M10.500 8.500h5v7h-5z" fill="#fff" stroke="#888"/></svg></button>
                    <button aria-label="视图管理器"><svg class="ic" viewBox="0 0 16 16"><path d="M.5.500h13v14H.5zM.5 3.500h13M.5 7.500h13M.5 11.500h6M4.500.500v14M9.500.500V7" fill="#fff" stroke="#888"/><path d="M6 9h2l1-2h4l1 2h2v7H6z" fill="#333"/><circle cx="11" cy="12" r="2" fill="#ddd"/></svg></button>
                    <button aria-label="透视图"><svg class="ic" viewBox="0 0 16 16"><path d="M.5 3.500 6 .5l9.500 1V13L11 15.500.5 11z" fill="#bde7f7" stroke="#6ba9c2"/><path d="M11 4.500 15.500 1.500V13L11 15.500z" fill="#4aa7cf"/><path d="M.5 3.500 11 4.500M6 .5V10l-5.500 1M6 10l9 3" fill="none" stroke="#6ba9c2"/></svg></button>
                    <button class="menu" aria-label="截面"><svg class="ic" viewBox="0 0 16 16"><path d="M1.500 15V4l3-3.500H15" fill="#d9f4ff" stroke="#6ba9c2"/><path d="M1.500 15 15 .5" stroke="#333" stroke-width="1.400"/><path d="M4 15.500h9V5" fill="none" stroke="#777" stroke-dasharray="1 1"/></svg></button>
                    <button class="menu" aria-label="基准显示"><svg class="ic" viewBox="0 0 16 16"><path d="M0 1l4 4M4 1 0 5M12 0l-2 5M5 8l-3 7M9.500 6v6H16M9.500 12 6 15.500M8 7h3M14 10.500v3" fill="none" stroke="#7a5b22" stroke-width="1.400"/></svg></button>
                    <button class="on" aria-label="注释显示"><svg class="ic" viewBox="0 0 16 16"><path d="M.5.500h9v6h-9z" fill="#fff5dc" stroke="#b08c4a"/><path d="M10 3.500h5L13 8h-2zM12 7v2" fill="none" stroke="#333"/><ellipse cx="11" cy="13" rx="4.500" ry="2.500" fill="#fff" stroke="#333"/><circle cx="11" cy="13" r="1.500" fill="#333"/></svg></button>
                    <button class="on" aria-label="旋转中心"><svg class="ic" viewBox="0 0 16 16"><path d="M3 2l4 6 6 1M7 8l-4 6" fill="none" stroke="#444"/><circle cx="3" cy="3" r="2.300" fill="#4caf50"/><circle cx="13" cy="8.500" r="2.300" fill="#e0584f"/><circle cx="3" cy="13.500" r="2.300" fill="#1d7bb0"/></svg></button>
                    <button aria-label="仿真"><svg class="ic" viewBox="0 0 16 16"><path d="M7.500 1.500 14.500 14H.5z" fill="#e4e4e4" stroke="#aaa" stroke-width="1.500"/><path d="M7.500 6l2.500 5H5z" fill="#fff" stroke="#aaa"/><path d="M10 8l6 4-6 4z" fill="#aaa"/></svg></button>
                    <button aria-label="暂停"><svg class="ic" viewBox="0 0 16 16"><path d="M3 2h4v12H3zM9 2h4v12H9z" fill="#a2a2a2"/></svg></button>
                    <button aria-label="步进"><svg class="ic" viewBox="0 0 16 16"><path d="M0 2h15v12H0v-3h5c5 0 5-6 0-6H0z" fill="#bbb"/></svg></button>
                </div>
            </section>
        </main>
    </div>
</body>
</html>
```
FILE: styles.css
```css
* {
    box-sizing: border-box;
}

body {
    margin: 0;
    font-family: "Open Sans", "Noto Sans CJK SC", sans-serif;
    font-size: 12px;
    line-height: 16px;
    color: #3c4244;
    background: #fff;
}

button {
    font: inherit;
    color: inherit;
    background: none;
    border: none;
    padding: 0;
    white-space: nowrap;
}

svg {
    display: block;
    flex: none;
}

ul {
    list-style: none;
    margin: 0;
    padding: 0;
}

.defs {
    position: absolute;
}

.ic {
    width: 16px;
    height: 16px;
}

.ic18 {
    width: 18px;
    height: 16px;
}

.ic30 {
    width: 30px;
    height: 30px;
}

.app {
    display: flex;
    flex-direction: column;
    height: 100vh;
    overflow: hidden;
    border-top: 3px solid #a3a3a3;
    border-left: 1px solid #a3a3a3;
}

/* small drop-down triangle */
.arr {
    display: flex;
    align-items: center;
    justify-content: center;
    flex: none;
    width: 8px;
    height: 8px;
}

.arr::before {
    content: '';
    border: 4px solid transparent;
    border-top-color: #555;
    border-bottom: none;
}

.arr.off::before {
    border-top-color: #9fa5a5;
}

.arr.white::before {
    border-top-color: #fff;
}

/* title bar */
.titlebar {
    display: flex;
    flex: none;
    align-items: center;
    height: 28px;
    padding-left: 8px;
    background: #d9dfde;
}

.brand {
    display: flex;
    align-items: center;
    gap: 6px;
    width: 80px;
    padding-bottom: 2px;
    font-size: 17px;
    color: #444;
}

.brand span::after {
    content: '';
    display: inline-block;
    width: 3px;
    height: 3px;
    margin-left: 1px;
    border-radius: 50%;
    vertical-align: 8px;
    background: #444;
}

.quick {
    display: flex;
    align-items: center;
    gap: 8px;
}

.quick .arr {
    margin-left: -2px;
}

.vsep {
    width: 1px;
    height: 24px;
    margin-left: -5px;
    background: #a5abab;
}

.quick .more {
    margin-left: 0;
    border-top: 1px solid #333;
}

h1 {
    flex: 1;
    margin: 0;
    padding-left: 175px;
    font-size: 13px;
    font-weight: normal;
    white-space: nowrap;
}

.winbtns {
    display: flex;
    gap: 18px;
    padding-right: 10px;
}

/* ribbon tabs */
.tabs {
    display: flex;
    flex: none;
    height: 29px;
    font-size: 13px;
    color: #fff;
    background: #3e4647;
}

.tabs > button {
    padding: 0 24px 0 23px;
}

.tabs .file {
    padding: 0 20px;
    background: linear-gradient(160deg, #66d040, #4c9c34);
}

.tabs .active {
    color: #3f8a1f;
    background: #f7f9fb;
}

.tools {
    display: flex;
    align-items: center;
    gap: 12px;
    margin-left: auto;
    padding: 0 2px 4px 0;
}

.tools .arr {
    margin-left: -6px;
}

/* ribbon */
.ribbon {
    display: flex;
    flex: none;
    height: 113px;
    background: #f7f9fb;
    border-bottom: 1px solid #aebdbc;
    overflow: hidden;
}

.group {
    display: flex;
    flex-direction: column;
    flex: none;
    padding: 1px 7px 0;
    border-right: 1px solid;
    border-image: linear-gradient(#f7f9fb 2px, #b4b9bb 3px, #a5aaac 110px, #f7f9fb 111px) 1;
}

.group.last {
    border: none;
}

.cols {
    display: flex;
    gap: 8px;
    height: 84px;
}

.col button {
    display: flex;
    align-items: center;
    height: 28px;
}

.col .ic {
    margin-right: 4px;
}

.col .arr {
    margin-left: 6px;
}

.col button:disabled {
    color: #a5a5a5;
}

.col button:disabled .arr {
    opacity: .5;
}

.big {
    display: flex;
    flex-direction: column;
    align-items: center;
    min-width: 32px;
    padding-top: 6px;
}

.big .ic30 {
    margin-bottom: 11px;
}

.big .arr {
    margin-top: 4px;
}

.caption {
    display: flex;
    align-items: center;
    justify-content: center;
    gap: 3px;
    height: 28px;
    padding-top: 2px;
}

.last .big {
    padding-left: 3px;
}

.last .caption {
    margin-left: -3px;
}

/* side panel */
.work {
    display: flex;
    flex: 1;
    min-height: 0;
}

.side {
    display: flex;
    flex-direction: column;
    flex: none;
    width: 293px;
    background: #f5f9fa;
    border-right: 3px solid #d9dfde;
}

.strip {
    display: flex;
    flex: none;
    height: 26px;
    background: #d9dfde;
}

.strip button {
    display: flex;
    align-items: center;
    justify-content: center;
    width: 32px;
}

.strip .on {
    background: #f5f9fa;
}

.bar {
    display: flex;
    flex: none;
    align-items: center;
    height: 32px;
    padding: 0 4px 0 11px;
}

.bar.second {
    height: 36px;
    border-top: 3px solid #d9dfde;
}

.bar button {
    display: flex;
    align-items: center;
    justify-content: center;
    width: 24px;
    height: 24px;
}

.bar .fold {
    width: 15px;
    margin-right: 2px;
}

.fold::before {
    content: '';
    border: 5px solid transparent;
    border-top: 7px solid #777;
    border-bottom: none;
}

.dots {
    height: 13px;
    margin: 0 20px 0 5px;
    border-left: 2px dotted #999;
}

.sep {
    width: 8px;
    height: 24px;
    background: linear-gradient(#a8adaf, #a8adaf) center / 1px 100% no-repeat;
}

.bar .on,
.viewbar .on {
    background: #dcdee1;
    border: 1px solid #a5a5a5;
}

.bar .push {
    margin-left: auto;
}

.filter {
    display: flex;
    flex: none;
    align-items: center;
    gap: 4px;
    height: 32px;
    padding: 0 12px 3px 12px;
}

.search {
    display: flex;
    flex: 1;
    height: 29px;
    background: #fff;
    border: 1px solid #a9b4b7;
}

.search input {
    flex: 1;
    min-width: 0;
    border: none;
    outline: none;
    font: inherit;
    background: none;
}

.search button {
    width: 18px;
    font-size: 18px;
    color: #999;
}

.filter .arr {
    margin: 0 6px 0 2px;
}

/* trees */
.pane {
    display: flex;
    min-height: 0;
    padding: 0 5px 0 11px;
    background: #f8f9fc;
}

.model {
    flex: 8 1 0;
}

.layers {
    flex: 5 1 0;
}

.rowsbox {
    display: flex;
    flex-direction: column;
    flex: 1;
    min-width: 0;
    overflow: hidden;
}

.tree li {
    display: flex;
    align-items: center;
    height: 22px;
    white-space: nowrap;
}

.tree span {
    margin-left: 5px;
}

.br {
    flex: none;
    align-self: stretch;
    width: 20px;
    background:
        linear-gradient(#c0c4c6, #c0c4c6) 8px 50% / 9px 1px no-repeat,
        linear-gradient(#c0c4c6, #c0c4c6) 8px 0 / 1px 100% no-repeat;
}

.br.skip {
    background: linear-gradient(#c0c4c6, #c0c4c6) 8px 0 / 1px 100% no-repeat;
}

.br.end {
    background:
        linear-gradient(#c0c4c6, #c0c4c6) 8px 50% / 9px 1px no-repeat,
        linear-gradient(#c0c4c6, #c0c4c6) 8px 0 / 1px 50% no-repeat;
}

.br.closed,
.br.open {
    display: flex;
    align-items: center;
    padding-left: 6px;
    background:
        linear-gradient(#c0c4c6 5px, transparent 5px, transparent 17px, #c0c4c6 17px) 8px 0 / 1px 100% no-repeat;
}

.br.closed::before {
    content: '';
    border: 4px solid transparent;
    border-left: 5px solid #444;
    border-right: none;
}

.br.open {
    padding-left: 4px;
}

.br.open::before {
    content: '';
    border: 4px solid transparent;
    border-top: 5px solid #444;
    border-bottom: none;
}

/* insert marker: green line with a small arrow at each end */
.insert {
    display: flex;
    align-items: center;
    justify-content: space-between;
    flex: none;
    height: 7px;
    margin-top: 3px;
    background: linear-gradient(#7ed25e, #55b82e) center / 100% 2px no-repeat;
}

.insert::before,
.insert::after {
    content: '';
    border: 3px solid transparent;
}

.insert::before {
    border-left-color: #55b82e;
    border-right: none;
}

.insert::after {
    border-right-color: #55b82e;
    border-left: none;
}

.rolled {
    flex: 1;
    padding-top: 4px;
    color: #808080;
    background: #e3e3e3;
}

.rolled .ic {
    opacity: .6;
}

.mark {
    display: flex;
    gap: 2px;
}

.mark::before {
    content: '';
    width: 4px;
    height: 5px;
    margin-top: 2px;
    background: currentColor;
}

.focus {
    padding: 1px 0;
    outline: 1px dotted #555;
}

.layers li {
    height: 20px;
}

.layers span {
    margin-left: 9px;
}

.layers .root span {
    margin-left: 7px;
}

.hid {
    color: #bdb29a;
}

.hid .ic {
    opacity: .4;
}

.scroll {
    display: flex;
    flex-direction: column;
    flex: none;
    width: 15px;
    margin-top: 2px;
    background: #dedfe3;
}

.up,
.down {
    display: flex;
    align-items: center;
    justify-content: center;
    height: 14px;
    background: #f8f9fa;
    border: 1px solid #c4c4c4;
}

.up::before,
.down::before {
    content: '';
    border: 4px solid transparent;
}

.up::before {
    border-bottom-color: #999;
    border-top: none;
}

.down::before {
    border-top-color: #999;
    border-bottom: none;
}

.down {
    margin-top: auto;
}

.thumb {
    height: 47%;
    margin-top: 13px;
    background: #f8f9fa;
    border: 1px solid #b0b4b6;
}

.layers .thumb {
    flex: 1;
    margin-top: 0;
}

.combo {
    display: flex;
    flex: none;
    height: 25px;
    margin: 0 5px 0 8px;
    border: 1px solid #c8cccd;
}

.combo button {
    width: 24px;
    padding: 0 3px;
    background: #eceeef;
    border-right: 1px solid #c8cccd;
}

.combo select {
    flex: 1;
    appearance: none;
    padding: 0 7px;
    font: inherit;
    color: #999;
    opacity: 1;
    border: none;
    border-radius: 0;
    background:
        linear-gradient(45deg, transparent 50%, #999 50%) right 8px center / 4px 4px no-repeat,
        linear-gradient(-45deg, transparent 50%, #999 50%) right 4px center / 4px 4px no-repeat,
        linear-gradient(#c8cccd, #c8cccd) right 15px top / 1px 100% no-repeat,
        #f8f9fa;
}

/* graphics area */
.canvas {
    position: relative;
    flex: 1;
    min-width: 0;
    background: #fff;
    overflow: hidden;
}

.scene {
    width: 100%;
    height: 100%;
}

.viewbar {
    position: absolute;
    top: 7px;
    left: 313px;
    display: flex;
    gap: 2px;
    padding: 3px;
    background: #f7f9fb;
    border: 1px solid #9c9c9c;
}

.viewbar button {
    position: relative;
    display: flex;
    align-items: center;
    justify-content: center;
    width: 24px;
    height: 24px;
}

.menu::after {
    content: '';
    position: absolute;
    right: 0;
    bottom: 2px;
    border: 2px solid #444;
    border-top-color: transparent;
    border-left-color: transparent;
}

.edge {
    fill: none;
    stroke: #996633;
}

.edge.over {
    stroke-opacity: .85;
}

.curve {
    fill: none;
    stroke: #0a0ae0;
    stroke-width: 1.2;
}

.tag,
.axis {
    font-family: "Liberation Mono", monospace;
    font-size: 15px;
}

.tag {
    fill: #996633;
}

.note {
    font-size: 17px;
    font-weight: bold;
    fill: #f00;
}

.mark-logo {
    font-family: "Noto Sans CJK SC", sans-serif;
    font-size: 40px;
    font-weight: 400;
    font-style: italic;
}

.mark-logo .url {
    font-family: "Liberation Sans", sans-serif;
    font-size: 17px;
    font-weight: bold;
    fill: #a5a5a5;
}
```
